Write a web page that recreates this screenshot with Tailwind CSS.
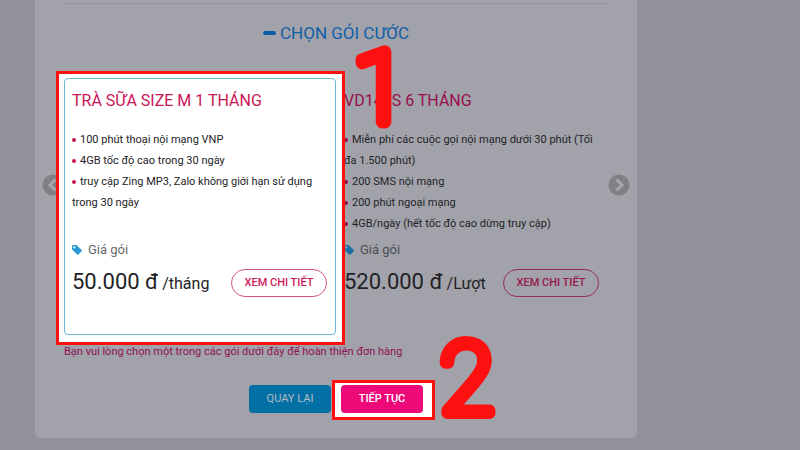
<!DOCTYPE html>
<html lang="vi">
<head>
  <meta charset="UTF-8" />
  <meta name="viewport" content="width=device-width, initial-scale=1.0" />
  <title>Chọn gói cước</title>
  <script src="https://cdn.jsdelivr.net/npm/@tailwindcss/browser@4"></script>
</head>
<body class="bg-[#92929a] min-h-screen font-[Roboto,sans-serif] text-[#222226]">
  <main class="relative ml-[35px] w-[calc(75%+2px)] bg-[#a2a2aa] rounded-b-md px-[29px] pt-[3px] pb-[25px]">
    <hr class="border-[#9797a0] mb-[18px]" />

    <h1 class="flex items-center justify-center gap-1 text-[17px] leading-[22px] text-[#0f60a8]">
      <span class="w-[13px] h-1 rounded-sm bg-[#0a5cab]"></span>
      CHỌN GÓI CƯỚC
    </h1>

    <!-- Packages -->
    <div class="relative mt-[34px] grid grid-cols-2">
      <article class="relative z-10">
        <!-- Step 1 frame -->
        <div class="absolute -left-2 -right-[9px] -top-[7px] -bottom-[10px] border-3 border-[#ff1010] bg-white"></div>
        <div class="relative h-full rounded border border-[#6db6cf] pl-[7px] pr-2 pt-2 pb-9">
          <h2 class="text-base leading-7 text-[#c91557]">TRÀ SỮA SIZE M 1 THÁNG</h2>
          <ul class="mt-3.5 h-[103px] text-[11px] leading-[21px]">
            <li><span class="inline-block w-1 h-1 mr-1 rounded-full align-middle bg-[#c91557]"></span>100 phút thoại nội mạng VNP</li>
            <li><span class="inline-block w-1 h-1 mr-1 rounded-full align-middle bg-[#c91557]"></span>4GB tốc độ cao trong 30 ngày</li>
            <li><span class="inline-block w-1 h-1 mr-1 rounded-full align-middle bg-[#c91557]"></span>truy cập Zing MP3, Zalo không giới hạn sử dụng trong 30 ngày</li>
          </ul>
          <p class="mt-2 flex items-center gap-1.5 text-[13px] leading-5 text-[#6b6b6b]">
            <svg class="w-2.5 h-2.5 text-[#2b9bd3]" viewBox="0 0 10 10" fill="currentColor"><path fill-rule="evenodd" d="M0 1Q0 0 1 0h3.4l5.3 5.1q.6.6 0 1.2L6.4 9.6q-.6.6-1.2 0L0 4.5zM2.2 1.2a1 1 0 1 0 .01 0z" /></svg>
            Giá gói
          </p>
          <div class="mt-2 flex items-center justify-between">
            <p class="leading-7"><span class="text-[22px]">50.000 đ</span> <span class="text-base">/tháng</span></p>
            <button class="h-7 w-24 rounded-full border border-[#d2577f] text-[11px] font-medium text-[#cf1a5b]">XEM CHI TIẾT</button>
          </div>
        </div>
      </article>

      <article class="border border-transparent pl-[7px] pr-2 pt-2 pb-9">
        <h2 class="text-base leading-7 text-[#970f4c]">VD149S 6 THÁNG</h2>
        <ul class="mt-3.5 h-[103px] text-[11px] leading-[21px]">
          <li><span class="inline-block w-1 h-1 mr-1 rounded-full align-middle bg-[#970f4c]"></span>Miễn phí các cuộc gọi nội mạng dưới 30 phút (Tối đa 1.500 phút)</li>
          <li><span class="inline-block w-1 h-1 mr-1 rounded-full align-middle bg-[#970f4c]"></span>200 SMS nội mạng</li>
          <li><span class="inline-block w-1 h-1 mr-1 rounded-full align-middle bg-[#970f4c]"></span>200 phút ngoại mạng</li>
          <li><span class="inline-block w-1 h-1 mr-1 rounded-full align-middle bg-[#970f4c]"></span>4GB/ngày (hết tốc độ cao dừng truy cập)</li>
        </ul>
        <p class="mt-2 flex items-center gap-1.5 text-[13px] leading-5 text-[#4e4e54]">
          <svg class="w-2.5 h-2.5 text-[#1a6f9e]" viewBox="0 0 10 10" fill="currentColor"><path fill-rule="evenodd" d="M0 1Q0 0 1 0h3.4l5.3 5.1q.6.6 0 1.2L6.4 9.6q-.6.6-1.2 0L0 4.5zM2.2 1.2a1 1 0 1 0 .01 0z" /></svg>
          Giá gói
        </p>
        <div class="mt-2 flex items-center justify-between">
          <p class="leading-7"><span class="text-[22px]">520.000 đ</span> <span class="text-base">/Lượt</span></p>
          <button class="h-7 w-24 rounded-full border border-[#962d5f] text-[11px] font-medium text-[#96194f]">XEM CHI TIẾT</button>
        </div>
      </article>

      <!-- Slider arrows -->
      <button aria-label="Trước" class="absolute -left-[22px] top-24">
        <svg class="w-[22px] h-[22px]" viewBox="0 0 22 22" fill="none"><circle cx="11" cy="11" r="10.5" fill="#808086" /><path d="M13.5 5.5 8 11l5.5 5.5" stroke="#a6a6ad" stroke-width="3" /></svg>
      </button>
      <button aria-label="Sau" class="absolute -right-[22px] top-24">
        <svg class="w-[22px] h-[22px]" viewBox="0 0 22 22" fill="none"><circle cx="11" cy="11" r="10.5" fill="#808086" /><path d="M8.5 5.5 14 11l-5.5 5.5" stroke="#a6a6ad" stroke-width="3" /></svg>
      </button>
    </div>

    <p class="mt-2 text-[11px] leading-[18px] text-[#8f1152]">Bạn vui lòng chọn một trong các gói dưới đây để hoàn thiện đơn hàng</p>

    <div class="mt-6 flex justify-center gap-2.5">
      <button class="h-7 w-[82px] rounded-sm bg-[#0270a5] text-[11px] text-[#b4bcc6]">QUAY LẠI</button>
      <div class="relative">
        <!-- Step 2 frame -->
        <div class="absolute -left-[9px] -right-3 -top-[5px] -bottom-[7px] border-3 border-[#ff1010] bg-white"></div>
        <button class="relative h-7 w-[82px] rounded-sm bg-[#ee0979] text-[11px] font-medium text-white">TIẾP TỤC</button>
      </div>
    </div>

    <!-- Step numbers -->
    <svg class="absolute z-20 left-[310px] top-6 w-20 h-32 fill-[#ff1010] stroke-[#ff1010]" viewBox="0 0 80 128">
      <text x="8" y="98" font-family="Roboto" font-size="99" font-weight="100" stroke-width="13" stroke-linejoin="round">1</text>
    </svg>
    <svg class="absolute z-20 left-[400px] top-[314px] w-20 h-32 fill-[#ff1010] stroke-[#ff1010]" viewBox="0 0 80 128">
      <text x="5" y="99" font-family="Roboto" font-size="99" font-weight="100" stroke-width="12" stroke-linejoin="round">2</text>
    </svg>
  </main>
</body>
</html>
